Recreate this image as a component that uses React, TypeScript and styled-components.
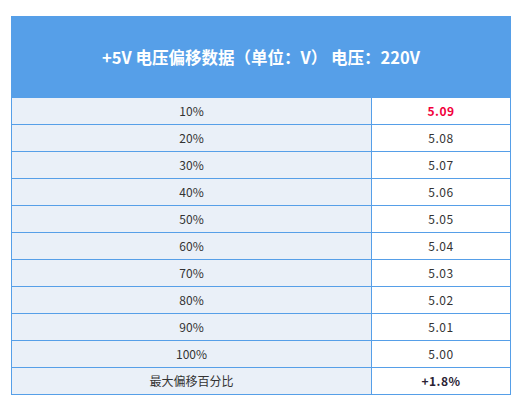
import React from "react";
import styled, { createGlobalStyle } from "styled-components";

const Global = createGlobalStyle`
  html, body { margin: 0; padding: 0; background: #ffffff; }
  body { font-family: "Noto Sans CJK SC", "DejaVu Sans", sans-serif; }
`;

const Page = styled.div`
  padding: 16px 0 0 11px;
`;

const Table = styled.table`
  width: 500px;
  border-collapse: collapse;
  table-layout: fixed;
`;

const HeadCell = styled.th`
  height: 80px;
  padding: 0;
  background: #569fe8;
  border: 1px solid #569fe8;
  color: #ffffff;
  font-family: "Noto Sans CJK SC", "Noto Sans", sans-serif;
  font-size: 16.5px;
  font-weight: 700;
  text-align: center;
  vertical-align: middle;
`;

const Cell = styled.td<{ $label?: boolean; $tone?: "red" | "bold" }>`
  height: 26px;
  padding: 0;
  border: 1px solid #569fe8;
  background: ${(p) => (p.$label ? "#eaf0f8" : "#ffffff")};
  color: ${(p) => (p.$tone === "red" ? "#f2003c" : p.$tone === "bold" ? "#2a2233" : "#333333")};
  font-weight: ${(p) => (p.$tone ? 700 : 400)};
  font-family: "Noto Sans CJK SC", "DejaVu Sans", sans-serif;
  font-size: 12px;
  line-height: 26px;
  text-align: center;
  letter-spacing: ${(p) => (p.$label ? "0" : "0.5px")};
`;

const rows: [string, string, ("red" | "bold")?][] = [
  ["10%", "5.09", "red"],
  ["20%", "5.08"],
  ["30%", "5.07"],
  ["40%", "5.06"],
  ["50%", "5.05"],
  ["60%", "5.04"],
  ["70%", "5.03"],
  ["80%", "5.02"],
  ["90%", "5.01"],
  ["100%", "5.00"],
  ["最大偏移百分比", "+1.8%", "bold"],
];

export default function App() {
  return (
    <>
      <Global />
      <Page>
        <Table>
          <colgroup>
            <col style={{ width: 360 }} />
            <col />
          </colgroup>
          <thead>
            <tr>
              <HeadCell colSpan={2}>+5V 电压偏移数据（单位：V） 电压：220V</HeadCell>
            </tr>
          </thead>
          <tbody>
            {rows.map(([k, v, tone]) => (
              <tr key={k}>
                <Cell $label>{k}</Cell>
                <Cell $tone={tone}>{v}</Cell>
              </tr>
            ))}
          </tbody>
        </Table>
      </Page>
    </>
  );
}
